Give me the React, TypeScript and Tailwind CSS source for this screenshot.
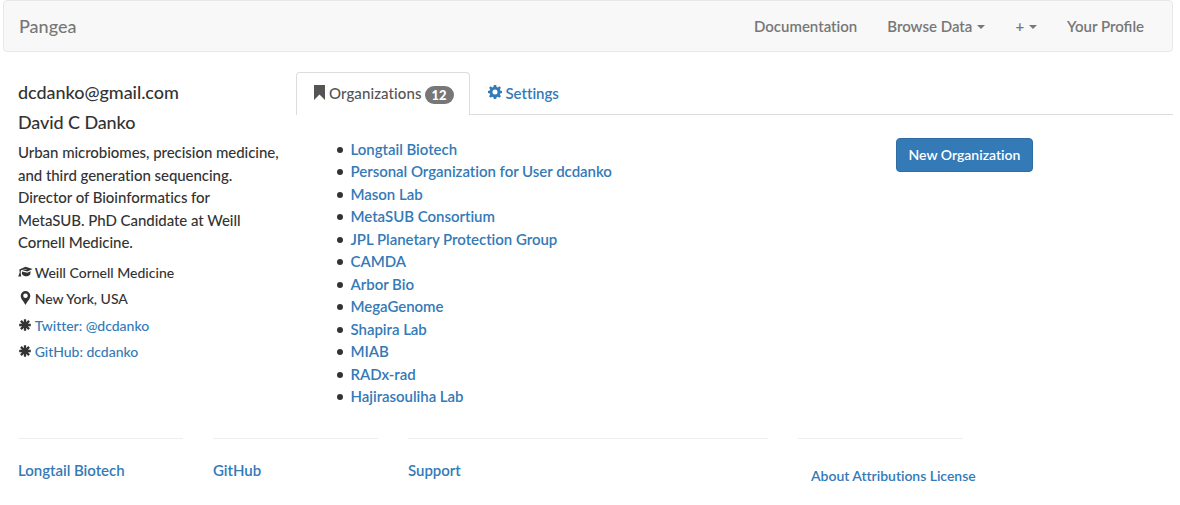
import React from 'react';

const organizations = [
  'Longtail Biotech',
  'Personal Organization for User dcdanko',
  'Mason Lab',
  'MetaSUB Consortium',
  'JPL Planetary Protection Group',
  'CAMDA',
  'Arbor Bio',
  'MegaGenome',
  'Shapira Lab',
  'MIAB',
  'RADx-rad',
  'Hajirasouliha Lab',
];

function Caret() {
  return <span className="mt-[2px] ml-[5px] inline-block border-x-4 border-t-4 border-x-transparent border-t-[#777]" />;
}

function BookmarkIcon() {
  return (
    <svg viewBox="0 0 12 15" className="-mt-[3px] h-[15px] w-3 shrink-0" fill="currentColor">
      <path d="M0 0H11V15L5.500 9.500 0 15Z" />
    </svg>
  );
}

function CogIcon() {
  return (
    <svg viewBox="0 0 14 14" className="-mt-[2px] h-[14px] w-[14px] shrink-0" fill="currentColor">
      <path
        fillRule="evenodd"
        d="M5.800 0H8.200L8.600 1.900 9.800 2.400 11.400 1.300 12.900 2.800 11.800 4.400 12.200 5.500 14 5.900V8.100L12.200 8.500 11.800 9.600 12.900 11.200 11.400 12.700 9.800 11.700 8.600 12.200 8.200 14H5.800L5.400 12.200 4.200 11.700 2.600 12.700 1.100 11.200 2.200 9.600 1.800 8.500 0 8.100V5.900L1.800 5.500 2.200 4.400 1.100 2.800 2.600 1.300 4.200 2.400 5.400 1.900ZM7 4.500A2.500 2.500 0 1 0 7 9.500 2.500 2.500 0 1 0 7 4.500Z"
      />
    </svg>
  );
}

function CapIcon() {
  return (
    <svg viewBox="0 0 15 12" className="-mt-[2px] h-3 w-[15px]" fill="currentColor">
      <path d="M7.500.8 14.600 3 9.300 5.400 4.500 4.300 8.700 3.400 8.500 2.900 3 4.200 2.600 6.200 3.200 10.500H.2L1.700 6.600 1.300 3.500Z" />
      <path d="M4 5.400 9.300 6.700 12.600 5.200 12.300 8.300C11.300 9.700 9.800 10.300 8.500 10.300 6.500 10.300 5 9.400 3.900 8.200Z" />
    </svg>
  );
}

function PinIcon() {
  return (
    <svg viewBox="0 0 10 14" className="-mt-[2px] h-[14px] w-[15px]" fill="currentColor">
      <path fillRule="evenodd" d="M5 0A4.800 4.800 0 0 0 .2 4.800C.2 8 3.300 10.500 5 14 6.700 10.500 9.800 8 9.800 4.800A4.800 4.800 0 0 0 5 0ZM5 2.500A2.300 2.300 0 1 1 5 7.100 2.300 2.300 0 1 1 5 2.500Z" />
    </svg>
  );
}

function AsteriskIcon() {
  return (
    <svg viewBox="0 0 12 12" className="-mt-[2px] mr-[1px] h-3 w-[14px]" fill="none" stroke="currentColor" strokeWidth="2.300">
      <path d="M6 .2V11.800M.2 6H11.800M1.900 1.900 10.100 10.100M10.100 1.900 1.900 10.100" />
    </svg>
  );
}

function Detail({ icon, children }: { icon: React.ReactNode; children: React.ReactNode }) {
  return (
    <div className="flex h-[26.400px] items-center gap-[1.700px] text-[14px] leading-[20px]">
      {icon}
      {children}
    </div>
  );
}

const link = 'text-[#337ab7] font-semibold tracking-[-0.03px]';

export default function App() {
  return (
    <div className="h-[505px] w-[1180px] overflow-hidden bg-white pl-[3px] font-['Lato',sans-serif] text-[15px] leading-[22.500px] font-medium text-[#333] [font-variant-ligatures:none]">
      <div className="w-[1170px]">
        <nav className="flex h-[52px] items-center justify-between rounded-[4px] border border-[#e7e7e7] bg-[#f8f8f8] pr-[28px] pl-[15px] text-[#777]">
          <a className="text-[18px]">Pangea</a>
          <div className="flex gap-[30px] font-semibold">
            <a>Documentation</a>
            <a className="flex items-center">Browse Data <Caret /></a>
            <a className="flex items-center">+ <Caret /></a>
            <a className="[font-variant-ligatures:normal]">Your Profile</a>
          </div>
        </nav>

        <div className="flex h-[386px] pt-5">
          <aside className="w-[293px] pr-[15px] pl-[15px]">
            <h4 className="mt-[10px] text-[18px] leading-[20px] tracking-[-0.05px]">dcdanko@gmail.com</h4>
            <h4 className="mt-[10px] text-[18px] leading-[20px] tracking-[-0.1px]">David C Danko</h4>
            <p className="mt-[9px] tracking-[-0.05px]">
              Urban microbiomes, precision medicine,<br />
              and third generation sequencing.<br />
              Director of Bioinformatics for<br />
              MetaSUB. PhD Candidate at Weill<br />
              Cornell Medicine.
            </p>
            <div className="mt-[6.300px]">
              <Detail icon={<CapIcon />}>Weill Cornell Medicine</Detail>
              <Detail icon={<PinIcon />}>New York, USA</Detail>
              <Detail icon={<AsteriskIcon />}><a className="font-medium tracking-[-0.03px] text-[#337ab7]">Twitter: @dcdanko</a></Detail>
              <Detail icon={<AsteriskIcon />}><a className="font-medium tracking-[-0.03px] text-[#337ab7]">GitHub: dcdanko</a></Detail>
            </div>
          </aside>

          <main className="flex-1">
            <div className="flex h-[43px] border-b border-[#ddd]">
              <div className="flex h-[43px] w-[174px] items-center rounded-t-[4px] border border-b-0 border-[#ddd] bg-white pl-[17px] text-[#555]">
                <BookmarkIcon />
                <span className="-mt-px ml-[3px] tracking-[0.09px]">Organizations</span>
                <span className="mt-[2px] ml-[3px] flex h-[18px] w-[29px] items-center justify-center rounded-[10px] bg-[#777] pt-px text-[13px] leading-none font-black text-white">12</span>
              </div>
              <a className={`ml-[18px] flex items-center ${link}`}>
                <CogIcon />
                <span className="ml-[3.500px]">Settings</span>
              </a>
            </div>
            <div className="flex pt-[23px]">
              <ul className="-mt-[0.5px] w-[600px] pl-[41px]">
                {organizations.map((name) => (
                  <li key={name} className="flex h-[22.500px] items-center">
                    <span className="mt-[2px] mr-[7.500px] size-[6px] rounded-full bg-[#333]" />
                    <a className={link}>{name}</a>
                  </li>
                ))}
              </ul>
              <button className="h-[34px] w-[137px] rounded-[4px] border border-[#2e6da4] bg-[#337ab7] text-[14px] leading-[20px] font-semibold text-white">New Organization</button>
            </div>
          </main>
        </div>

        <footer className="flex gap-[30px] pl-[15px]">
          <div className="w-[165px] border-t border-[#eee] pt-[20px]"><a className={link}>Longtail Biotech</a></div>
          <div className="w-[165px] border-t border-[#eee] pt-[20px]"><a className={link}>GitHub</a></div>
          <div className="w-[360px] border-t border-[#eee] pt-[20px]"><a className={link}>Support</a></div>
          <div className="w-[165px] border-t border-[#eee] pt-[26px] pl-[13px] text-[14px] whitespace-nowrap"><a className={link}>About Attributions License</a></div>
        </footer>
      </div>
    </div>
  );
}
